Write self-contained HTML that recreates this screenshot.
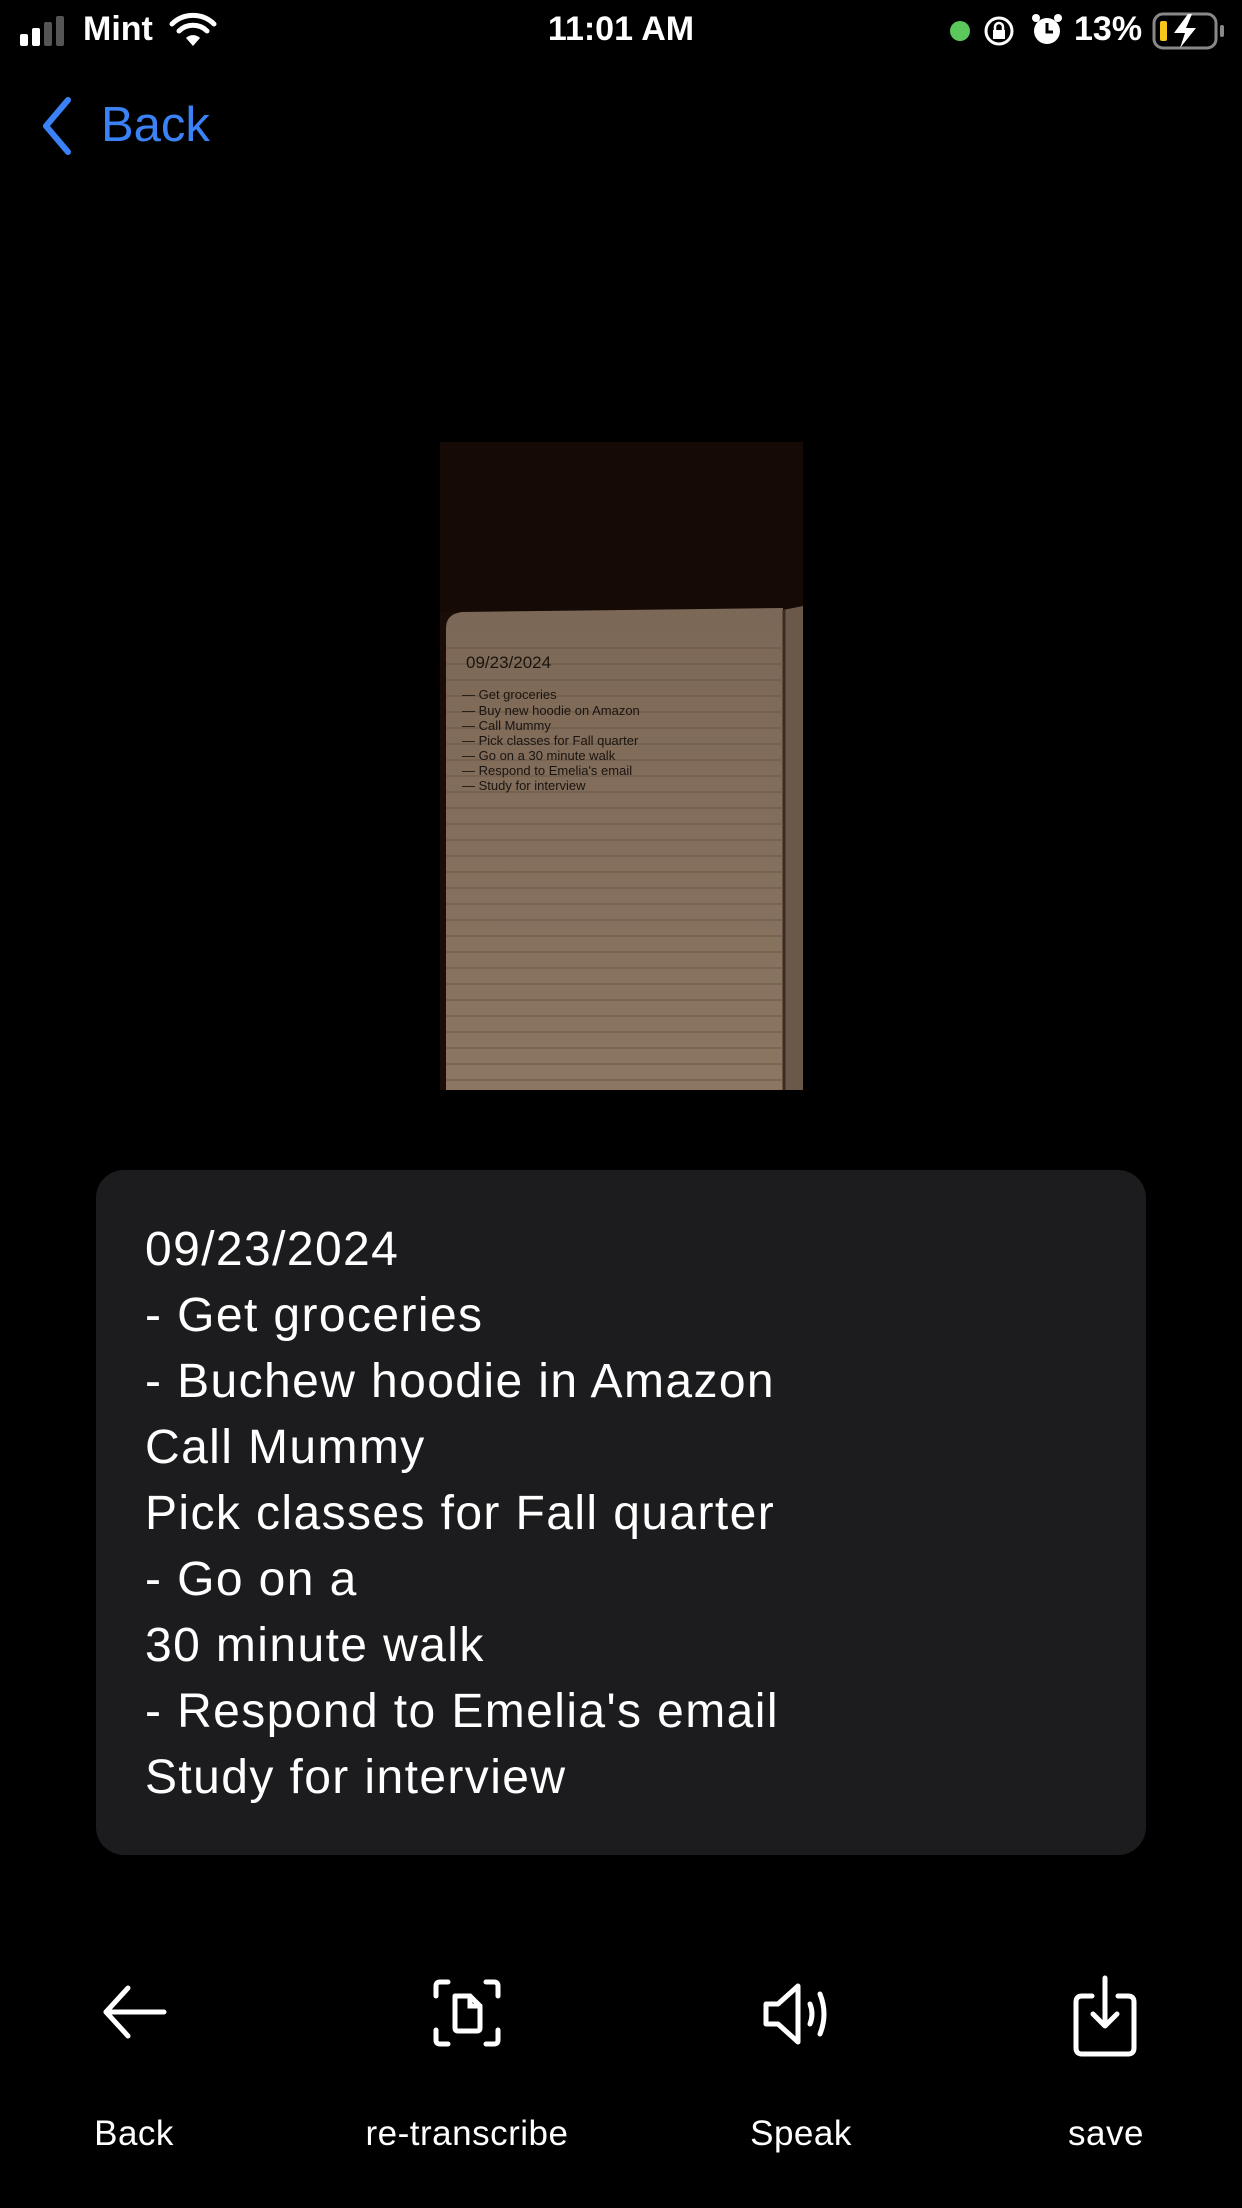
<!DOCTYPE html>
<html><head><meta charset="utf-8"><style>
html,body{margin:0;padding:0;background:#000;}
body{width:1242px;height:2208px;position:relative;overflow:hidden;font-family:"Liberation Sans",sans-serif;color:#fff;}
.abs{position:absolute;}
.lbl{position:absolute;top:2114px;font-size:35px;letter-spacing:0.5px;transform:translateX(-50%);white-space:nowrap;}
.card{position:absolute;left:96px;top:1170px;width:1050px;height:685px;background:#1c1c1e;border-radius:28px;}
.card div{position:absolute;left:49px;font-size:48px;letter-spacing:1.4px;white-space:nowrap;}
</style></head><body>
<!-- status bar -->
<svg class="abs" style="left:18px;top:14px" width="52" height="34"><rect x="2" y="20" width="8" height="12" rx="2" fill="#fff"/><rect x="14" y="14" width="8" height="18" rx="2" fill="#fff"/><rect x="26" y="8" width="8" height="24" rx="2" fill="#555"/><rect x="38" y="2" width="8" height="30" rx="2" fill="#555"/></svg>
<div class="abs" style="left:83px;top:10px;font-size:34px;font-weight:600">Mint</div>
<svg class="abs" style="left:168px;top:12px" width="50" height="36" viewBox="0 0 50 36"><path d="M4 12 A30 30 0 0 1 46 12" stroke="#fff" stroke-width="5" fill="none" stroke-linecap="round"/><path d="M11 19 A20 20 0 0 1 39 19" stroke="#fff" stroke-width="5" fill="none" stroke-linecap="round"/><path d="M18 26 A10 10 0 0 1 32 26 L25 34 Z" fill="#fff"/></svg>
<div class="abs" style="left:0;width:1242px;text-align:center;top:10px;font-size:34px;font-weight:600">11:01 AM</div>
<div class="abs" style="left:950px;top:21px;width:20px;height:20px;border-radius:50%;background:#5ac85a"></div>
<svg class="abs" style="left:982px;top:14px" width="34" height="34"><circle cx="17" cy="17" r="13" stroke="#fff" stroke-width="3" fill="none"/><rect x="11" y="16" width="12" height="9" fill="#fff"/><path d="M13 16 v-3 a4 4 0 0 1 8 0 v3" stroke="#fff" stroke-width="2.5" fill="none"/></svg>
<svg class="abs" style="left:1030px;top:12px" width="34" height="36"><circle cx="17" cy="19" r="13" fill="#fff"/><path d="M17 11 v9 h6" stroke="#000" stroke-width="3" fill="none"/><circle cx="6" cy="6" r="4" fill="#fff"/><circle cx="28" cy="6" r="4" fill="#fff"/></svg>
<div class="abs" style="left:1074px;top:10px;font-size:34px;font-weight:600">13%</div>
<svg class="abs" style="left:1152px;top:12px" width="75" height="38"><rect x="2" y="2" width="62" height="34" rx="9" stroke="#888" stroke-width="3" fill="none"/><rect x="68" y="13" width="4" height="12" rx="2" fill="#888"/><rect x="8" y="9" width="7" height="20" rx="2" fill="#f5c518"/><path d="M36 2 L22 21 H33 L28 36 L44 16 H34 L40 2 Z" fill="#fff"/></svg>
<!-- Back nav -->
<svg class="abs" style="left:38px;top:96px" width="36" height="60"><path d="M30 4 L8 30 L30 56" stroke="#3b82f6" stroke-width="6" fill="none" stroke-linecap="round" stroke-linejoin="round"/></svg>
<div class="abs" style="left:101px;top:97px;font-size:49px;color:#3b82f6">Back</div>
<!-- photo -->
<svg class="abs" style="left:440px;top:442px" width="363" height="648" viewBox="0 0 363 648">
<defs><linearGradient id="p" x1="0" y1="0" x2="0" y2="1"><stop offset="0" stop-color="#7c6856"/><stop offset="1" stop-color="#8c7662"/></linearGradient></defs>
<rect width="363" height="648" fill="#1a0d08"/>
<rect width="363" height="170" fill="#150a06"/>
<path d="M6 186 Q6 172 22 170 L343 166 L343 648 L6 648 Z" fill="url(#p)"/>
<path d="M343 168 L363 164 L363 648 L343 648 Z" fill="#6c5848"/>
<line x1="344" y1="168" x2="344" y2="648" stroke="#3a2c22" stroke-width="3"/>
<g stroke="#6a5746" stroke-width="1">
<line x1="6" y1="206" x2="343" y2="206"/><line x1="6" y1="222" x2="343" y2="222"/><line x1="6" y1="238" x2="343" y2="238"/><line x1="6" y1="254" x2="343" y2="254"/><line x1="6" y1="270" x2="343" y2="270"/><line x1="6" y1="286" x2="343" y2="286"/><line x1="6" y1="302" x2="343" y2="302"/><line x1="6" y1="318" x2="343" y2="318"/><line x1="6" y1="334" x2="343" y2="334"/><line x1="6" y1="350" x2="343" y2="350"/><line x1="6" y1="366" x2="343" y2="366"/><line x1="6" y1="382" x2="343" y2="382"/><line x1="6" y1="398" x2="343" y2="398"/><line x1="6" y1="414" x2="343" y2="414"/><line x1="6" y1="430" x2="343" y2="430"/><line x1="6" y1="446" x2="343" y2="446"/><line x1="6" y1="462" x2="343" y2="462"/><line x1="6" y1="478" x2="343" y2="478"/><line x1="6" y1="494" x2="343" y2="494"/><line x1="6" y1="510" x2="343" y2="510"/><line x1="6" y1="526" x2="343" y2="526"/><line x1="6" y1="542" x2="343" y2="542"/><line x1="6" y1="558" x2="343" y2="558"/><line x1="6" y1="574" x2="343" y2="574"/><line x1="6" y1="590" x2="343" y2="590"/><line x1="6" y1="606" x2="343" y2="606"/><line x1="6" y1="622" x2="343" y2="622"/><line x1="6" y1="638" x2="343" y2="638"/>
</g>
<g fill="#1a1410" font-family="Liberation Sans" font-size="13">
<text x="26" y="226" font-size="17">09/23/2024</text>
<text x="22" y="257">— Get groceries</text>
<text x="22" y="273">— Buy new hoodie on Amazon</text>
<text x="22" y="288">—  Call Mummy</text>
<text x="22" y="303">— Pick classes for Fall quarter</text>
<text x="22" y="318">—  Go on a 30 minute walk</text>
<text x="22" y="333">—  Respond to Emelia's email</text>
<text x="22" y="348">—  Study for interview</text>
</g>
</svg>
<!-- card -->
<div class="card">
<div style="top:52px">09/23/2024</div>
<div style="top:118px">- Get groceries</div>
<div style="top:184px">- Buchew hoodie in Amazon</div>
<div style="top:250px">Call Mummy</div>
<div style="top:316px">Pick classes for Fall quarter</div>
<div style="top:382px">- Go on a</div>
<div style="top:448px">30 minute walk</div>
<div style="top:514px">- Respond to Emelia's email</div>
<div style="top:580px">Study for interview</div>
</div>
<!-- bottom toolbar -->
<svg class="abs" style="left:100px;top:1984px" width="70" height="56"><path d="M64 28 H8 M28 4 L6 28 L28 52" stroke="#fff" stroke-width="5" fill="none" stroke-linecap="round" stroke-linejoin="round"/></svg>
<svg class="abs" style="left:432px;top:1978px" width="70" height="70"><g stroke="#fff" stroke-width="5" fill="none" stroke-linecap="round"><path d="M16 4 H8 Q4 4 4 8 V18"/><path d="M54 4 H62 Q66 4 66 8 V18"/><path d="M4 52 V62 Q4 66 8 66 H16"/><path d="M66 52 V62 Q66 66 62 66 H54"/><path d="M23 18 H38 L48 28 V50 Q48 53 45 53 H26 Q23 53 23 50 Z" stroke-linejoin="round"/><path d="M38 18 V28 H48"/></g></svg>
<svg class="abs" style="left:762px;top:1982px" width="80" height="64"><g stroke="#fff" stroke-width="5" fill="none" stroke-linecap="round" stroke-linejoin="round"><path d="M4 22 H16 L36 4 V60 L16 42 H4 Z"/><path d="M48 22 Q52 32 48 42"/><path d="M58 12 Q66 32 58 52"/></g></svg>
<svg class="abs" style="left:1072px;top:1974px" width="66" height="86"><g stroke="#fff" stroke-width="5" fill="none" stroke-linecap="round" stroke-linejoin="round"><path d="M20 22 H10 Q4 22 4 28 V74 Q4 80 10 80 H56 Q62 80 62 74 V28 Q62 22 56 22 H46"/><path d="M33 4 V52 M21 40 L33 52 L45 40"/></g></svg>
<div class="lbl" style="left:134px">Back</div>
<div class="lbl" style="left:467px">re-transcribe</div>
<div class="lbl" style="left:801px">Speak</div>
<div class="lbl" style="left:1106px">save</div>
</body></html>
